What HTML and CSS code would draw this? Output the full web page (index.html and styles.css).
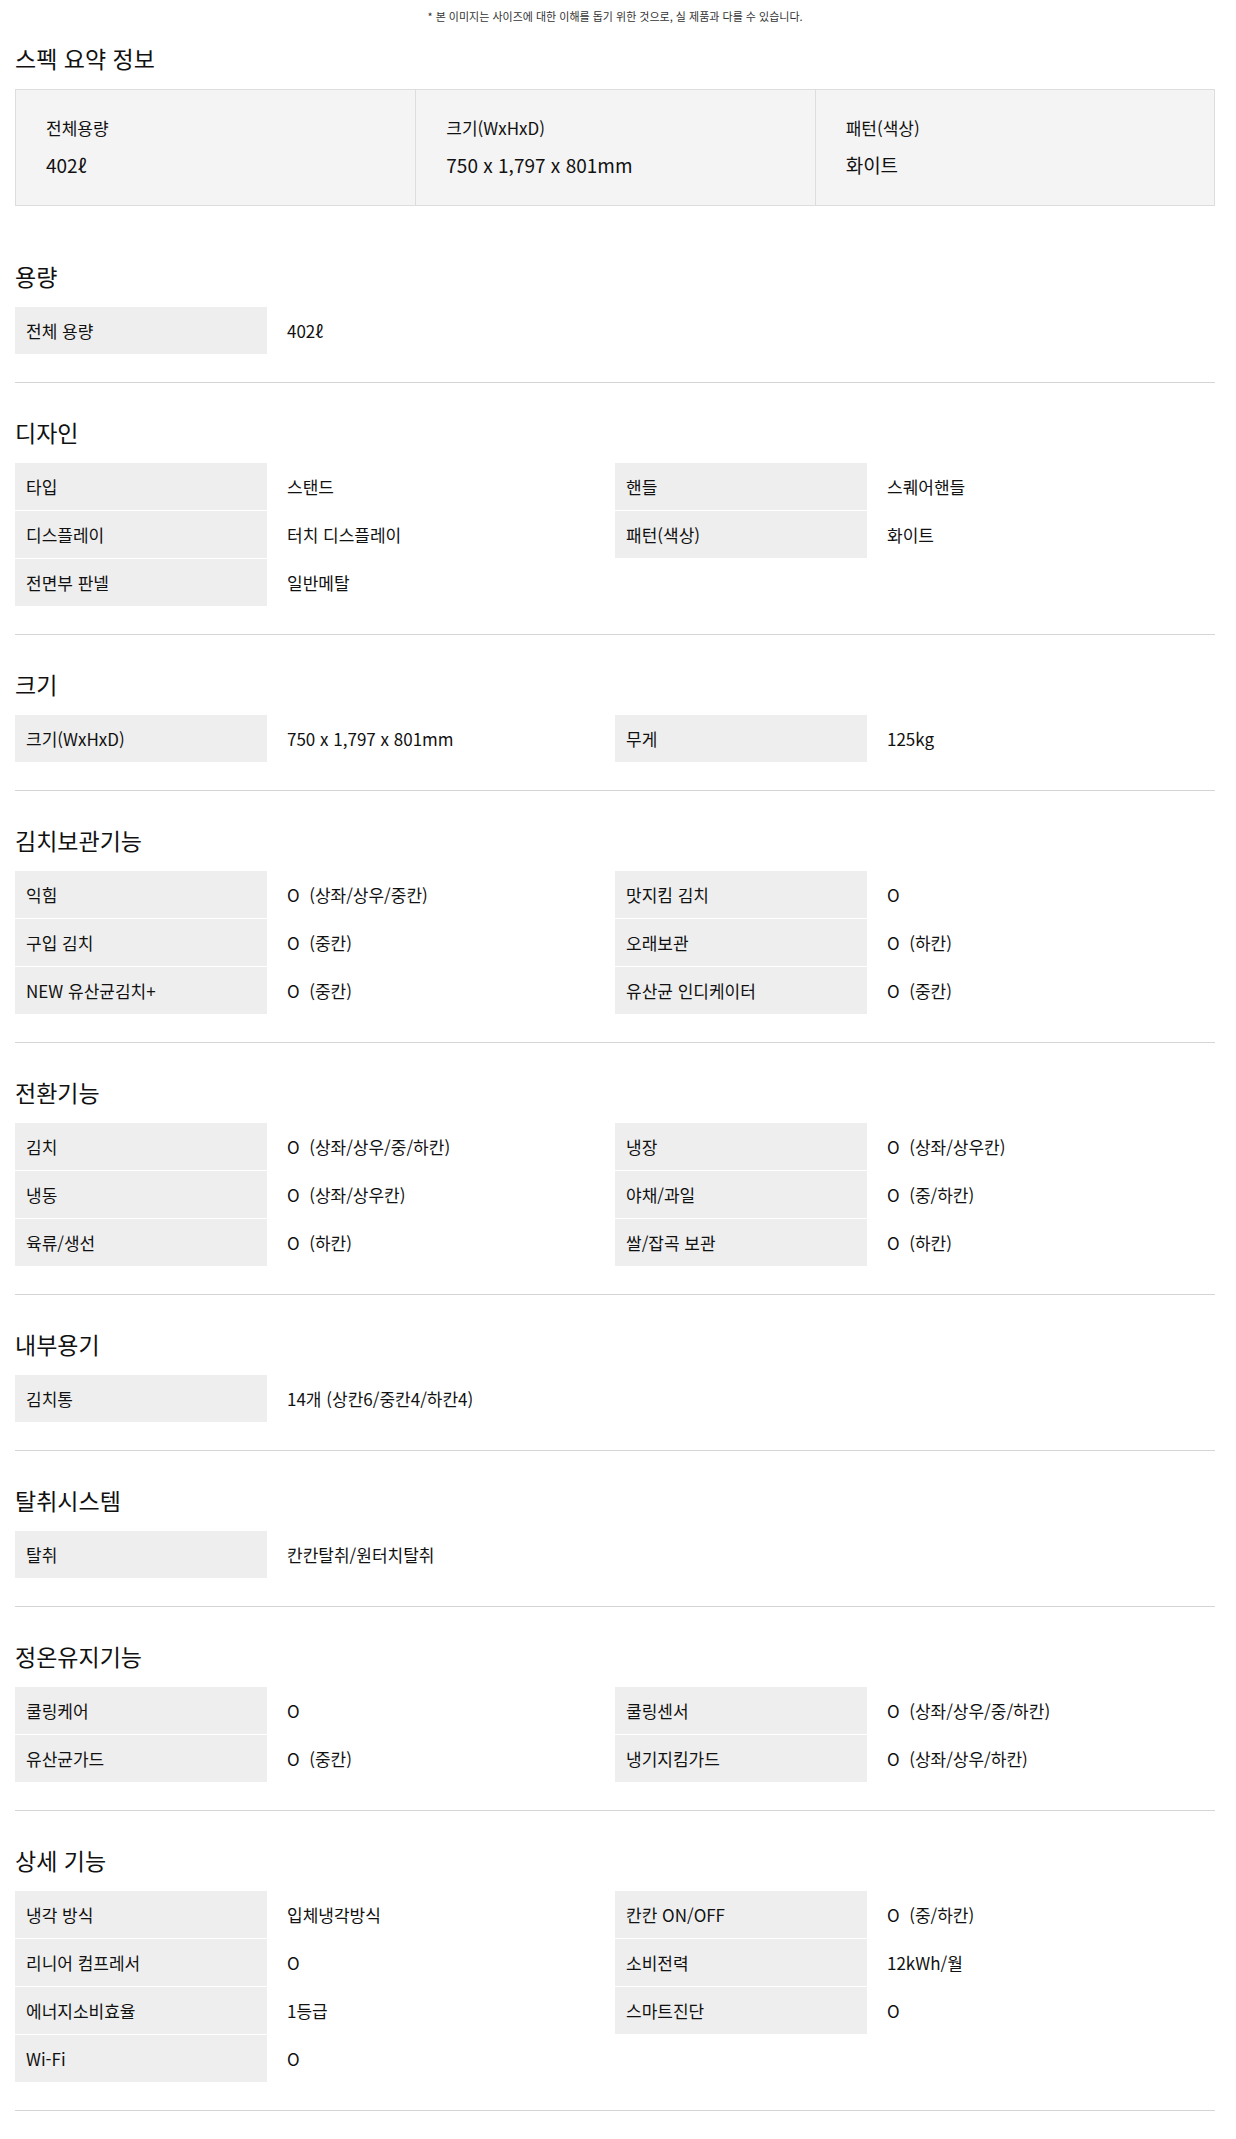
FILE: index.html
```html
<!DOCTYPE html>
<html lang="ko">
<head>
  <meta charset="UTF-8" />
  <meta name="viewport" content="width=device-width, initial-scale=1.0"/>
  <title>스펙 정보</title>
  <link rel="stylesheet" href="styles.css">
</head>
<body>
  <div class="wrap">
    <p class="notice">* 본 이미지는 사이즈에 대한 이해를 돕기 위한 것으로, 실 제품과 다를 수 있습니다.</p>

    <!-- 요약 -->
    <section class="summary">
      <h2 class="sec-title">스펙 요약 정보</h2>
      <div class="summary-box">
        <div class="summary-item">
          <p class="summary-label">전체용량</p>
          <p class="summary-value">402ℓ</p>
        </div>
        <div class="summary-item">
          <p class="summary-label">크기(WxHxD)</p>
          <p class="summary-value">750 x 1,797 x 801mm</p>
        </div>
        <div class="summary-item">
          <p class="summary-label">패턴(색상)</p>
          <p class="summary-value">화이트</p>
        </div>
      </div>
    </section>

    <section class="spec">
      <h3 class="sec-title">용량</h3>
      <dl class="spec-list">
        <div class="spec-row"><dt>전체 용량</dt><dd>402ℓ</dd></div>
      </dl>
    </section>

    <section class="spec">
      <h3 class="sec-title">디자인</h3>
      <dl class="spec-list">
        <div class="spec-row"><dt>타입</dt><dd>스탠드</dd></div>
        <div class="spec-row"><dt>핸들</dt><dd>스퀘어핸들</dd></div>
        <div class="spec-row"><dt>디스플레이</dt><dd>터치 디스플레이</dd></div>
        <div class="spec-row"><dt>패턴(색상)</dt><dd>화이트</dd></div>
        <div class="spec-row"><dt>전면부 판넬</dt><dd>일반메탈</dd></div>
      </dl>
    </section>

    <section class="spec">
      <h3 class="sec-title">크기</h3>
      <dl class="spec-list">
        <div class="spec-row"><dt>크기(WxHxD)</dt><dd>750 x 1,797 x 801mm</dd></div>
        <div class="spec-row"><dt>무게</dt><dd>125kg</dd></div>
      </dl>
    </section>

    <section class="spec">
      <h3 class="sec-title">김치보관기능</h3>
      <dl class="spec-list">
        <div class="spec-row"><dt>익힘</dt><dd>O&nbsp; (상좌/상우/중칸)</dd></div>
        <div class="spec-row"><dt>맛지킴 김치</dt><dd>O</dd></div>
        <div class="spec-row"><dt>구입 김치</dt><dd>O&nbsp; (중칸)</dd></div>
        <div class="spec-row"><dt>오래보관</dt><dd>O&nbsp; (하칸)</dd></div>
        <div class="spec-row"><dt>NEW 유산균김치+</dt><dd>O&nbsp; (중칸)</dd></div>
        <div class="spec-row"><dt>유산균 인디케이터</dt><dd>O&nbsp; (중칸)</dd></div>
      </dl>
    </section>

    <section class="spec">
      <h3 class="sec-title">전환기능</h3>
      <dl class="spec-list">
        <div class="spec-row"><dt>김치</dt><dd>O&nbsp; (상좌/상우/중/하칸)</dd></div>
        <div class="spec-row"><dt>냉장</dt><dd>O&nbsp; (상좌/상우칸)</dd></div>
        <div class="spec-row"><dt>냉동</dt><dd>O&nbsp; (상좌/상우칸)</dd></div>
        <div class="spec-row"><dt>야채/과일</dt><dd>O&nbsp; (중/하칸)</dd></div>
        <div class="spec-row"><dt>육류/생선</dt><dd>O&nbsp; (하칸)</dd></div>
        <div class="spec-row"><dt>쌀/잡곡 보관</dt><dd>O&nbsp; (하칸)</dd></div>
      </dl>
    </section>

    <section class="spec">
      <h3 class="sec-title">내부용기</h3>
      <dl class="spec-list">
        <div class="spec-row"><dt>김치통</dt><dd>14개 (상칸6/중칸4/하칸4)</dd></div>
      </dl>
    </section>

    <section class="spec">
      <h3 class="sec-title">탈취시스템</h3>
      <dl class="spec-list">
        <div class="spec-row"><dt>탈취</dt><dd>칸칸탈취/원터치탈취</dd></div>
      </dl>
    </section>

    <section class="spec">
      <h3 class="sec-title">정온유지기능</h3>
      <dl class="spec-list">
        <div class="spec-row"><dt>쿨링케어</dt><dd>O</dd></div>
        <div class="spec-row"><dt>쿨링센서</dt><dd>O&nbsp; (상좌/상우/중/하칸)</dd></div>
        <div class="spec-row"><dt>유산균가드</dt><dd>O&nbsp; (중칸)</dd></div>
        <div class="spec-row"><dt>냉기지킴가드</dt><dd>O&nbsp; (상좌/상우/하칸)</dd></div>
      </dl>
    </section>

    <section class="spec">
      <h3 class="sec-title">상세 기능</h3>
      <dl class="spec-list">
        <div class="spec-row"><dt>냉각 방식</dt><dd>입체냉각방식</dd></div>
        <div class="spec-row"><dt>칸칸 ON/OFF</dt><dd>O&nbsp; (중/하칸)</dd></div>
        <div class="spec-row"><dt>리니어 컴프레서</dt><dd>O</dd></div>
        <div class="spec-row"><dt>소비전력</dt><dd>12kWh/월</dd></div>
        <div class="spec-row"><dt>에너지소비효율</dt><dd>1등급</dd></div>
        <div class="spec-row"><dt>스마트진단</dt><dd>O</dd></div>
        <div class="spec-row"><dt>Wi-Fi</dt><dd>O</dd></div>
      </dl>
    </section>
  </div>
</body>
</html>
```

FILE: styles.css
```css
body {
  margin: 0;
  background: #fff;
  color: #111;
  font-family: "Noto Sans CJK KR", "Noto Sans", sans-serif;
}

.wrap {
  width: 1200px;
  margin-left: 15px;
}

.notice {
  margin: 0;
  padding-top: 8px;
  font-size: 11px;
  line-height: 17px;
  color: #333;
  text-align: center;
}

.sec-title {
  margin: 0 0 16px;
  font-size: 23px;
  line-height: 30px;
  font-weight: 400;
}

/* summary */
.summary {
  margin-top: 18px;
  margin-bottom: 21px;
}

.summary-box {
  display: grid;
  grid-template-columns: repeat(3, 1fr);
  background: #f4f4f4;
  border: 1px solid #ddd;
}

.summary-item {
  padding: 25px 30px 27px;
}

.summary-item + .summary-item {
  border-left: 1px solid #ddd;
}

.summary-label {
  margin: 0 0 11px;
  font-size: 17px;
  line-height: 25px;
}

.summary-value {
  margin: 0;
  font-size: 19px;
  line-height: 27px;
}

/* spec sections */
.spec {
  padding: 34px 0 28px;
  border-bottom: 1px solid #d5d5d5;
}

.spec-list {
  display: grid;
  grid-template-columns: 600px 600px;
  row-gap: 1px;
  margin: 0;
}

.spec-row {
  display: grid;
  grid-template-columns: 252px 1fr;
  height: 47px;
  font-size: 17px;
}

.spec-row dt,
.spec-row dd {
  display: flex;
  align-items: center;
  margin: 0;
}

.spec-row dt {
  padding-left: 11px;
  background: #eee;
}

.spec-row dd {
  padding-left: 20px;
}
```
